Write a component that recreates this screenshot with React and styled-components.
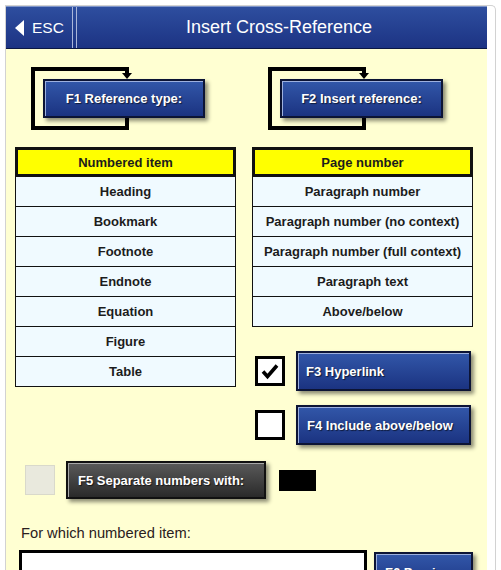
import React from "react";
import styled, { createGlobalStyle } from "styled-components";

const GlobalStyle = createGlobalStyle`
  html, body { margin: 0; padding: 0; background: #ffffff; }
  body { font-family: "Liberation Sans", Arial, sans-serif; }
  * { box-sizing: border-box; }
`;

const Frame = styled.div`
  margin: 5px 0 0 5px;
  width: 491px;
  height: 565px;
  display: flex;
  border: 1px solid #d2d2d2;
  border-bottom: none;
  border-top-right-radius: 5px;
  background: #ffffff;
  overflow: hidden;
`;

const Panel = styled.div`
  width: 481px;
  display: flex;
  flex-direction: column;
  background: #ffffd2;
`;

const Header = styled.div`
  height: 43px;
  flex: none;
  display: flex;
  align-items: stretch;
  background: linear-gradient(#2e4e9f, #1c3383);
  border-top: 1px solid #7f95c9;
  border-bottom: 1px solid #0b1744;
  color: #fff;
`;

const EscButton = styled.div`
  width: 67px;
  display: flex;
  align-items: center;
  gap: 8px;
  padding-left: 9px;
  font-size: 15.5px;
  border-right: 1px solid #aab6da;
`;

const HeaderDivider = styled.div`
  width: 4px;
  border-right: 1px solid #aab6da;
`;

const Title = styled.div`
  flex: 1;
  display: flex;
  align-items: center;
  justify-content: center;
  font-size: 18px;
  padding-right: 6px;
`;

const Content = styled.div`
  padding: 18px 14px 0 9px;
  display: flex;
  flex-direction: column;
`;

const Columns = styled.div`
  display: grid;
  grid-template-columns: 221px 221px;
  column-gap: 16px;
  row-gap: 17px;
  align-items: start;
`;

const BracketGroup = styled.div`
  position: relative;
  height: 63px;
  padding: 12px 0 0 28px;
`;

const BracketSvg = styled.svg`
  position: absolute;
  left: 16px;
  top: 0;
  z-index: 0;
`;

const Button = styled.div`
  position: relative;
  z-index: 1;
  width: ${(p) => p.$w}px;
  height: ${(p) => p.$h || 39}px;
  flex: none;
  display: flex;
  align-items: center;
  justify-content: ${(p) => (p.$center ? "center" : "flex-start")};
  padding: 0 ${(p) => p.$pad || 0}px;
  color: #fff;
  font-size: 13px;
  font-weight: bold;
  text-shadow: 1px 1px 1px rgba(0, 0, 0, 0.6);
  background: ${(p) =>
    p.$dark
      ? "linear-gradient(#5a5a5a, #2a2a2a)"
      : "linear-gradient(#3257a9, #1b3381)"};
  border: 2px solid ${(p) => (p.$dark ? "#111" : "#0c1435")};
  box-shadow: inset 1px 1px 0 ${(p) => (p.$dark ? "#a8a8a8" : "#9db0de")},
    3px 3px 4px rgba(0, 0, 0, 0.45);
  white-space: nowrap;
`;

const Column = styled.div`
  display: flex;
  flex-direction: column;
`;

const List = styled.div`
  display: flex;
  flex-direction: column;
`;

const Cell = styled.div`
  height: 30px;
  display: flex;
  align-items: center;
  justify-content: center;
  font-size: 13px;
  font-weight: bold;
  color: #1c1c1c;
  background: ${(p) => (p.$selected ? "#ffff00" : "#f0faff")};
  border: ${(p) => (p.$selected ? "3px solid #111" : "1px solid #111")};
  border-top: ${(p) => (p.$selected ? "3px solid #111" : "none")};
`;

const OptionRows = styled.div`
  display: flex;
  flex-direction: column;
  gap: 14px;
  margin-top: 24px;
`;

const OptionRow = styled.div`
  display: flex;
  align-items: center;
  gap: ${(p) => p.$gap || 11}px;
  padding-left: ${(p) => p.$indent || 0}px;
`;

const Checkbox = styled.div`
  width: 30px;
  height: 30px;
  flex: none;
  display: flex;
  align-items: center;
  justify-content: center;
  background: ${(p) => (p.$disabled ? "#e9e9dd" : "#fff")};
  border: ${(p) => (p.$disabled ? "1px solid #d9d9cb" : "3px solid #000")};
`;

const Swatch = styled.div`
  width: 37px;
  height: 21px;
  background: #000;
  margin-left: 2px;
`;

const F5Row = styled(OptionRow)`
  margin-top: 16px;
`;

const Label = styled.div`
  margin-top: 26px;
  padding-left: 6px;
  font-size: 14.7px;
  line-height: 17px;
  color: #2a2020;
`;

const InputRow = styled.div`
  margin-top: 8px;
  padding-left: 4px;
  display: flex;
  align-items: flex-start;
  gap: 7px;
`;

const TextInput = styled.div`
  width: 348px;
  height: 44px;
  background: #fff;
  border: 3px solid #000;
`;

const PreviewButton = styled(Button)`
  margin-top: 2px;
`;

function Bracket() {
  return (
    <BracketSvg width="104" height="64" viewBox="0 0 104 64">
      <g fill="#000">
        <rect x="0" y="0" width="4" height="63" />
        <rect x="0" y="0" width="98" height="4" />
        <rect x="0" y="59" width="98" height="4" />
        <rect x="94" y="0" width="4" height="8" />
        <rect x="94" y="48" width="4" height="15" />
        <polygon points="91,6 101,6 96,12" />
      </g>
    </BracketSvg>
  );
}

function Check() {
  return (
    <svg width="20" height="20" viewBox="0 0 20 20">
      <path
        d="M3 10.5 L7.5 15.5 L17 4.5"
        fill="none"
        stroke="#000"
        strokeWidth="3.6"
        strokeLinecap="butt"
        strokeLinejoin="miter"
      />
    </svg>
  );
}

const leftItems = ["Heading", "Bookmark", "Footnote", "Endnote", "Equation", "Figure", "Table"];
const rightItems = [
  "Paragraph number",
  "Paragraph number (no context)",
  "Paragraph number (full context)",
  "Paragraph text",
  "Above/below",
];

export default function App() {
  return (
    <>
      <GlobalStyle />
      <Frame>
        <Panel>
          <Header>
            <EscButton>
              <svg width="9" height="16" viewBox="0 0 9 16">
                <polygon points="9,0 9,16 0,8" fill="#fff" />
              </svg>
              ESC
            </EscButton>
            <HeaderDivider />
            <Title>Insert Cross-Reference</Title>
          </Header>
          <Content>
            <Columns>
              <BracketGroup>
                <Bracket />
                <Button $w={162} $center>F1 Reference type:</Button>
              </BracketGroup>
              <BracketGroup>
                <Bracket />
                <Button $w={163} $center>F2 Insert reference:</Button>
              </BracketGroup>
              <Column>
                <List>
                  <Cell $selected>Numbered item</Cell>
                  {leftItems.map((t) => (
                    <Cell key={t}>{t}</Cell>
                  ))}
                </List>
              </Column>
              <Column>
                <List>
                  <Cell $selected>Page number</Cell>
                  {rightItems.map((t) => (
                    <Cell key={t}>{t}</Cell>
                  ))}
                </List>
                <OptionRows>
                  <OptionRow $indent={3}>
                    <Checkbox>
                      <Check />
                    </Checkbox>
                    <Button $w={175} $h={40} $pad={8}>F3 Hyperlink</Button>
                  </OptionRow>
                  <OptionRow $indent={3}>
                    <Checkbox />
                    <Button $w={175} $h={40} $pad={9}>F4 Include above/below</Button>
                  </OptionRow>
                </OptionRows>
              </Column>
            </Columns>
            <F5Row $indent={10}>
              <Checkbox $disabled />
              <Button $w={200} $h={38} $pad={10} $dark>F5 Separate numbers with:</Button>
              <Swatch />
            </F5Row>
            <Label>For which numbered item:</Label>
            <InputRow>
              <TextInput />
              <PreviewButton $w={99} $h={40} $pad={9}>F6 Preview</PreviewButton>
            </InputRow>
          </Content>
        </Panel>
      </Frame>
    </>
  );
}
